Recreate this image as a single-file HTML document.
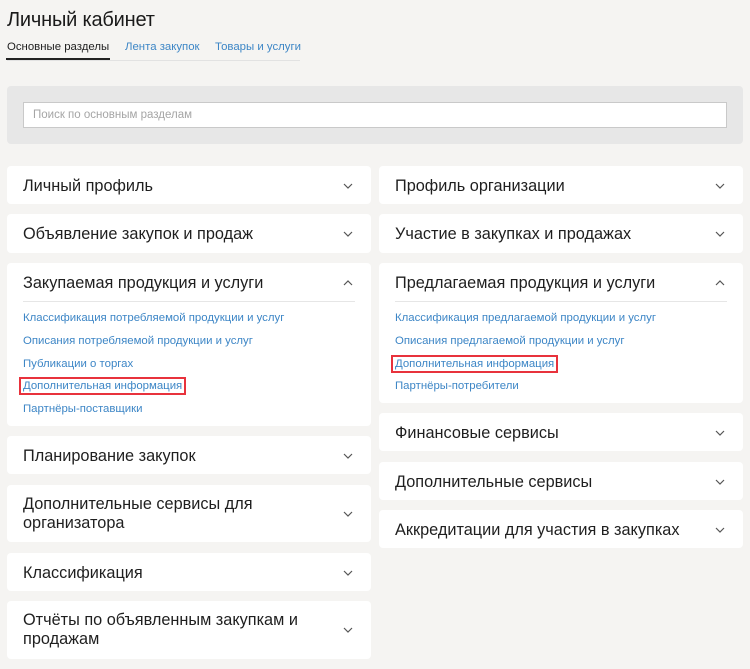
<!DOCTYPE html>
<html><head><meta charset="utf-8"><style>
*{margin:0;padding:0;box-sizing:border-box}
body{width:750px;height:669px;background:#f5f4f2;font-family:"Liberation Sans",Arial,sans-serif;position:relative;overflow:hidden;color:#222}
h1{position:absolute;left:7px;top:9px;font-size:20px;font-weight:normal;color:#1a1a1a;letter-spacing:-0.2px}
.tabs{position:absolute;left:7px;top:41px;font-size:11.4px;width:293px;height:20px;border-bottom:1px solid #e2e2e2;white-space:nowrap}
.tabs span{position:absolute;top:0}
.t1{left:0;color:#222}
.t1:after{content:"";position:absolute;left:-1px;right:-1px;top:17px;height:2px;background:#222}
.t2{left:118px;color:#3d86c6}
.t3{left:208px;color:#3d86c6}
.sb{position:absolute;left:7px;top:86px;width:736px;height:58px;background:#e7e7e7;border-radius:4px}
.inp{position:absolute;left:16px;top:16px;width:704px;height:26px;background:#fff;border:1px solid #c9c9c9;font-size:11.5px;color:#a5a5a5;padding:6px 9px}
.c{position:absolute;background:#fff;border-radius:4px;width:364px}
.L{left:7px}.R{left:379px}
.h{position:absolute;left:16px;font-size:16.3px;line-height:19px;color:#1f1f1f;white-space:nowrap}
.ch{position:absolute;right:18px;width:10px;height:6px}
.dv{position:absolute;left:16px;right:16px;top:38px;height:1px;background:#e6e6e6}
.a{position:absolute;left:16px;font-size:11.4px;color:#3d86c6;white-space:nowrap}
.box{outline:2px solid #e8323c;outline-offset:1px;padding:0 1px;margin-left:-1px}
</style></head><body>
<h1>Личный кабинет</h1>
<div class="tabs"><span class="t1">Основные разделы</span><span class="t2">Лента закупок</span><span class="t3">Товары и услуги</span></div>
<div class="sb"><div class="inp">Поиск по основным разделам</div></div>

<svg width="0" height="0" style="position:absolute"><defs>
<symbol id="dn" viewBox="0 0 10 6"><path d="M1 1l4 4 4-4" fill="none" stroke="#555" stroke-width="1.2"/></symbol>
<symbol id="up" viewBox="0 0 10 6"><path d="M1 5l4-4 4 4" fill="none" stroke="#555" stroke-width="1.2"/></symbol>
</defs></svg>

<div class="c L" style="top:166px;height:38px"><div class="h" style="top:11px">Личный профиль</div><svg class="ch" style="top:17px"><use href="#dn"/></svg></div>
<div class="c L" style="top:214px;height:39px"><div class="h" style="top:11px">Объявление закупок и продаж</div><svg class="ch" style="top:17px"><use href="#dn"/></svg></div>
<div class="c L" style="top:263px;height:163px"><div class="h" style="top:11px">Закупаемая продукция и услуги</div><svg class="ch" style="top:17px"><use href="#up"/></svg><div class="dv"></div>
<div class="a" style="top:49px">Классификация потребляемой продукции и услуг</div>
<div class="a" style="top:72px">Описания потребляемой продукции и услуг</div>
<div class="a" style="top:95px">Публикации о торгах</div>
<div class="a" style="top:117px"><span class="box">Дополнительная информация</span></div>
<div class="a" style="top:140px">Партнёры-поставщики</div></div>
<div class="c L" style="top:436px;height:38px"><div class="h" style="top:11px">Планирование закупок</div><svg class="ch" style="top:17px"><use href="#dn"/></svg></div>
<div class="c L" style="top:485px;height:57px"><div class="h" style="top:10px">Дополнительные сервисы для<br>организатора</div><svg class="ch" style="top:26px"><use href="#dn"/></svg></div>
<div class="c L" style="top:553px;height:38px"><div class="h" style="top:11px">Классификация</div><svg class="ch" style="top:17px"><use href="#dn"/></svg></div>
<div class="c L" style="top:601px;height:58px"><div class="h" style="top:10px">Отчёты по объявленным закупкам и<br>продажам</div><svg class="ch" style="top:26px"><use href="#dn"/></svg></div>

<div class="c R" style="top:166px;height:38px"><div class="h" style="top:11px">Профиль организации</div><svg class="ch" style="top:17px"><use href="#dn"/></svg></div>
<div class="c R" style="top:214px;height:39px"><div class="h" style="top:11px">Участие в закупках и продажах</div><svg class="ch" style="top:17px"><use href="#dn"/></svg></div>
<div class="c R" style="top:263px;height:140px"><div class="h" style="top:11px">Предлагаемая продукция и услуги</div><svg class="ch" style="top:17px"><use href="#up"/></svg><div class="dv"></div>
<div class="a" style="top:49px">Классификация предлагаемой продукции и услуг</div>
<div class="a" style="top:72px">Описания предлагаемой продукции и услуг</div>
<div class="a" style="top:95px"><span class="box">Дополнительная информация</span></div>
<div class="a" style="top:117px">Партнёры-потребители</div></div>
<div class="c R" style="top:413px;height:38px"><div class="h" style="top:11px">Финансовые сервисы</div><svg class="ch" style="top:17px"><use href="#dn"/></svg></div>
<div class="c R" style="top:462px;height:38px"><div class="h" style="top:11px">Дополнительные сервисы</div><svg class="ch" style="top:17px"><use href="#dn"/></svg></div>
<div class="c R" style="top:510px;height:38px"><div class="h" style="top:11px">Аккредитации для участия в закупках</div><svg class="ch" style="top:17px"><use href="#dn"/></svg></div>
</body></html>
